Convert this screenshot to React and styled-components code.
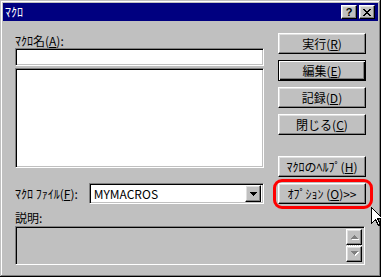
import React from 'react';
import styled, { createGlobalStyle, css } from 'styled-components';

const GlobalStyle = createGlobalStyle`
  html, body {
    margin: 0;
    padding: 0;
    background: #c0c0c0;
  }
  body {
    font-family: "MS UI Gothic", "Noto Sans CJK JP", sans-serif;
    font-size: 12px;
    color: #000;
  }
`;

const raised = css`
  border: 1px solid;
  border-color: #fff #000 #000 #fff;
  box-shadow: inset -1px -1px #808080, inset 1px 1px #dfdfdf;
`;

const sunken = css`
  border: 1px solid;
  border-color: #808080 #fff #fff #808080;
  box-shadow: inset 1px 1px #000, inset -1px -1px #c0c0c0;
`;

const Window = styled.div`
  position: relative;
  width: 381px;
  height: 277px;
  box-sizing: border-box;
  padding: 3px;
  background: #c0c0c0;
  box-shadow: inset -1px -1px #000, inset 1px 1px #c0c0c0,
    inset -2px -2px #808080, inset 2px 2px #fff;
  overflow: hidden;
  display: flex;
  flex-direction: column;
`;

const TitleBar = styled.div`
  height: 18px;
  background: #000080;
  color: #fff;
  display: flex;
  align-items: center;
  justify-content: space-between;
  padding: 0 3px 0 2px;
`;

const TitleText = styled.span`
  line-height: 18px;
  font-size: 12px;
`;

const TitleButtons = styled.div`
  display: flex;
  gap: 2px;
`;

const CaptionButton = styled.div`
  ${raised};
  box-sizing: border-box;
  width: 16px;
  height: 14px;
  background: #c0c0c0;
  color: #000;
  display: flex;
  align-items: center;
  justify-content: center;
  font-family: "Liberation Sans", sans-serif;
  font-weight: bold;
  font-size: 11px;
  line-height: 1;
`;

const Body = styled.div`
  flex: 1;
  padding: 12px 12px 0 12px;
  display: flex;
  flex-direction: column;
`;

const Columns = styled.div`
  display: flex;
  gap: 14px;
`;

const LeftCol = styled.div`
  width: 249px;
  display: flex;
  flex-direction: column;
`;

const RightCol = styled.div`
  width: 88px;
  display: flex;
  flex-direction: column;
`;

const Label = styled.div`
  height: 15px;
  line-height: 15px;
  white-space: nowrap;
`;

const TextField = styled.div`
  ${sunken};
  box-sizing: border-box;
  height: ${p => p.$h}px;
  margin-top: ${p => p.$mt || 0}px;
  background: ${p => (p.$disabled ? '#c0c0c0' : '#fff')};
`;

const Button = styled.div`
  ${raised};
  box-sizing: border-box;
  width: 88px;
  height: 21px;
  margin-top: ${p => p.$mt || 0}px;
  background: #c0c0c0;
  display: flex;
  align-items: center;
  justify-content: center;
  line-height: 14px;
  white-space: nowrap;
  ${p =>
    p.$default &&
    css`
      border-color: #000;
      box-shadow: inset 1px 1px #fff, inset -1px -1px #000,
        inset -2px -2px #808080;
    `}
`;

const FileRow = styled.div`
  margin-top: 6px;
  display: flex;
  gap: 14px;
`;

const FileLeft = styled.div`
  width: 249px;
  display: flex;
  align-items: center;
`;

const FileLabel = styled.div`
  width: 74px;
  line-height: 21px;
  white-space: nowrap;
`;

const Combo = styled.div`
  ${sunken};
  box-sizing: border-box;
  width: 176px;
  height: 21px;
  background: #fff;
  display: flex;
  align-items: center;
  padding: 2px 2px 2px 4px;
`;

const ComboText = styled.span`
  flex: 1;
  font-family: "Noto Sans CJK JP", sans-serif;
  font-size: 12px;
  line-height: 15px;
`;

const DropButton = styled.div`
  ${raised};
  box-sizing: border-box;
  width: 16px;
  height: 17px;
  background: #c0c0c0;
  display: flex;
  align-items: center;
  justify-content: center;
`;

const OptionsWrap = styled.div`
  position: relative;
`;

const RedRing = styled.div`
  position: absolute;
  top: -4px;
  left: -5px;
  right: -7px;
  bottom: -5px;
  border: 3px solid #ff0000;
  border-radius: 9px;
  pointer-events: none;
`;

const DescLabel = styled(Label)`
  margin-top: 6px;
`;

const DescBox = styled.div`
  ${sunken};
  box-sizing: border-box;
  width: 350px;
  height: 39px;
  margin-top: 1px;
  background: #c0c0c0;
  display: flex;
  justify-content: flex-end;
  padding: 2px;
`;

const ScrollBar = styled.div`
  width: 16px;
  display: flex;
  flex-direction: column;
`;

const ScrollButton = styled.div`
  ${raised};
  box-sizing: border-box;
  height: 16px;
  background: #c0c0c0;
  display: flex;
  align-items: center;
  justify-content: center;
`;

const ScrollTrack = styled.div`
  flex: 1;
  background: repeating-conic-gradient(#fff 0 25%, #c0c0c0 0 50%) 0 0 / 2px 2px;
`;

const Cursor = styled.svg`
  position: absolute;
  left: 371px;
  top: 207px;
`;

const Arrow = ({ up }) => (
  <svg width="9" height="6" viewBox="0 0 9 6" shapeRendering="crispEdges">
    {up ? (
      <>
        <path d="M2 5h7v1H2z M5 2h1v1H5z M6 3h1v1H6z M7 4h1v1H7z" fill="#fff" />
        <path d="M4 1h1v1H4z M3 2h3v1H3z M2 3h5v1H2z M1 4h7v1H1z" fill="#808080" />
      </>
    ) : (
      <>
        <path d="M2 1h7v1H2z M3 2h5v1H3z M4 3h3v1H4z M5 4h1v1H5z" fill="#fff" />
        <path d="M1 0h7v1H1z M2 1h5v1H2z M3 2h3v1H3z M4 3h1v1H4z" fill="#808080" />
      </>
    )}
  </svg>
);

const CloseGlyph = () => (
  <svg width="8" height="7" viewBox="0 0 8 7" shapeRendering="crispEdges">
    <path
      d="M0 0h2v1H0z M6 0h2v1H6z M1 1h2v1H1z M5 1h2v1H5z M2 2h4v1H2z M3 3h2v1H3z M2 4h4v1H2z M1 5h2v1H1z M5 5h2v1H5z M0 6h2v1H0z M6 6h2v1H6z"
      fill="#000"
    />
  </svg>
);

const ComboArrow = () => (
  <svg width="7" height="4" viewBox="0 0 7 4" shapeRendering="crispEdges">
    <path d="M0 0h7v1H0z M1 1h5v1H1z M2 2h3v1H2z M3 3h1v1H3z" fill="#000" />
  </svg>
);

export default function App() {
  return (
    <>
      <GlobalStyle />
      <Window>
        <TitleBar>
          <TitleText>ﾏｸﾛ</TitleText>
          <TitleButtons>
            <CaptionButton>?</CaptionButton>
            <CaptionButton>
              <CloseGlyph />
            </CaptionButton>
          </TitleButtons>
        </TitleBar>
        <Body>
          <Columns>
            <LeftCol>
              <Label>
                ﾏｸﾛ名(<u>A</u>):
              </Label>
              <TextField $h={18} />
              <TextField $h={100} $mt={2} />
            </LeftCol>
            <RightCol>
              <Button>
                実行(<u>R</u>)
              </Button>
              <Button $mt={6} $default>
                編集(<u>E</u>)
              </Button>
              <Button $mt={6}>
                記録(<u>D</u>)
              </Button>
              <Button $mt={6}>
                閉じる(<u>C</u>)
              </Button>
              <Button $mt={21}>
                ﾏｸﾛのﾍﾙﾌﾟ(<u>H</u>)
              </Button>
            </RightCol>
          </Columns>
          <FileRow>
            <FileLeft>
              <FileLabel>
                ﾏｸﾛ ﾌｧｲﾙ(<u>F</u>):
              </FileLabel>
              <Combo>
                <ComboText>MYMACROS</ComboText>
                <DropButton>
                  <ComboArrow />
                </DropButton>
              </Combo>
            </FileLeft>
            <OptionsWrap>
              <Button>
                ｵﾌﾟｼｮﾝ (<u>O</u>)&gt;&gt;
              </Button>
              <RedRing />
            </OptionsWrap>
          </FileRow>
          <DescLabel>説明:</DescLabel>
          <DescBox>
            <ScrollBar>
              <ScrollButton>
                <Arrow up />
              </ScrollButton>
              <ScrollTrack />
              <ScrollButton>
                <Arrow />
              </ScrollButton>
            </ScrollBar>
          </DescBox>
        </Body>
        <Cursor width="12" height="20" viewBox="0 0 12 20" shapeRendering="crispEdges">
          <path
            d="M0.5 0.5 L0.5 16.5 L4.5 12.5 L7.5 18.5 L9.5 17.5 L6.5 11.5 L11.5 11.5 Z"
            fill="#fff"
            stroke="#000"
            strokeWidth="1"
          />
        </Cursor>
      </Window>
    </>
  );
}
